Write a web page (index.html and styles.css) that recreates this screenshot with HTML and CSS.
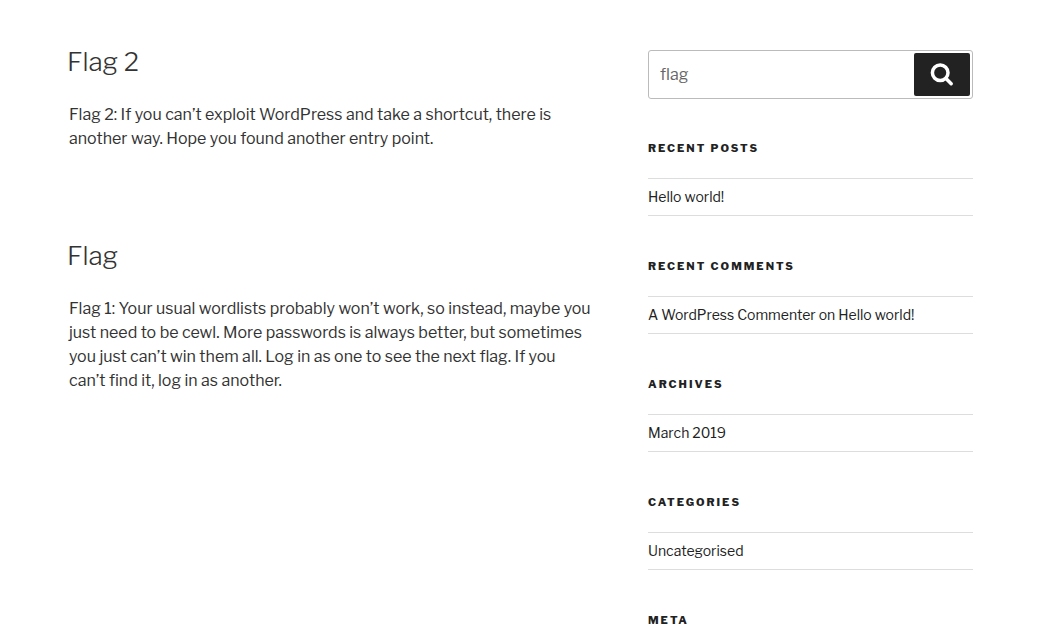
FILE: index.html
```html
<!DOCTYPE html>
<html lang="en">
<head>
<meta charset="utf-8">
<meta name="viewport" content="width=device-width, initial-scale=1">
<title>Search results</title>
<link rel="stylesheet" href="styles.css">
</head>
<body>
<div class="wrap">
  <main class="content">
    <article class="post">
      <h2 class="post-title">Flag 2</h2>
      <p class="post-text">Flag 2: If you can’t exploit WordPress and take a shortcut, there is another way. Hope you found another entry point.</p>
    </article>
    <article class="post">
      <h2 class="post-title">Flag</h2>
      <p class="post-text">Flag 1: Your usual wordlists probably won’t work, so instead, maybe you just need to be cewl. More passwords is always better, but sometimes you just can’t win them all. Log in as one to see the next flag. If you can’t find it, log in as another.</p>
    </article>
  </main>
  <aside class="sidebar">
    <form class="search" role="search">
      <input class="search-field" type="search" value="flag" aria-label="Search for">
      <button class="search-button" type="submit" aria-label="Search">
        <svg class="search-icon" viewBox="0 0 24 24" aria-hidden="true"><circle cx="10.2" cy="9.7" r="7.8"/><path d="M16 15.5 21.2 20.7"/></svg>
      </button>
    </form>
    <section class="widget">
      <h2 class="widget-title">Recent Posts</h2>
      <ul class="widget-list"><li><a href="#">Hello world!</a></li></ul>
    </section>
    <section class="widget">
      <h2 class="widget-title">Recent Comments</h2>
      <ul class="widget-list"><li><a href="#">A WordPress Commenter</a> on <a href="#">Hello world!</a></li></ul>
    </section>
    <section class="widget">
      <h2 class="widget-title">Archives</h2>
      <ul class="widget-list"><li><a href="#">March 2019</a></li></ul>
    </section>
    <section class="widget">
      <h2 class="widget-title">Categories</h2>
      <ul class="widget-list"><li><a href="#">Uncategorised</a></li></ul>
    </section>
    <section class="widget">
      <h2 class="widget-title">Meta</h2>
    </section>
  </aside>
</div>
</body>
</html>
```
FILE: styles.css
```css
* { box-sizing: border-box; }
body {
  margin: 0;
  background: #fff;
  color: #333;
  font-family: "Libre Franklin", "Open Sans", "Noto Sans", sans-serif;
  font-size: 16px;
  line-height: 24px;
}
.wrap {
  display: grid;
  grid-template-columns: 21fr 13fr;
  column-gap: 54px;
  padding: 44px 77px 0 69px;
}
.post { margin-bottom: 87px; }
.post-title {
  margin: 0 0 23px -2px;
  font-size: 26px;
  font-weight: 300;
  line-height: 36px;
}
.post-text { margin: 0; }
.search {
  display: flex;
  height: 49px;
  margin: 6px 0 43px;
  padding: 2px;
  border: 1px solid #bbb;
  border-radius: 3px;
}
.search-field {
  flex: 1;
  min-width: 0;
  padding: 0 9px;
  border: 0;
  background: transparent;
  color: #666;
  font: inherit;
}
.search-button {
  display: grid;
  place-items: center;
  width: 56px;
  padding: 0;
  border: 0;
  border-radius: 2px;
  background: #222;
}
.search-icon {
  width: 24px;
  height: 24px;
  fill: none;
  stroke: #fff;
  stroke-width: 3.5;
  stroke-linecap: round;
}
.widget + .widget { margin-top: 44px; }
.widget-title {
  margin: 0;
  color: #222;
  font-size: 11px;
  font-weight: 800;
  letter-spacing: 2px;
  line-height: 12px;
  text-transform: uppercase;
}
.widget-list {
  margin: 24px 0 0;
  padding: 0;
  list-style: none;
  font-size: 14px;
}
.widget-list li {
  padding: 6px 0;
  border-top: 1px solid #ddd;
  border-bottom: 1px solid #ddd;
  color: #222;
}
.widget-list a { color: #222; text-decoration: none; }
```
